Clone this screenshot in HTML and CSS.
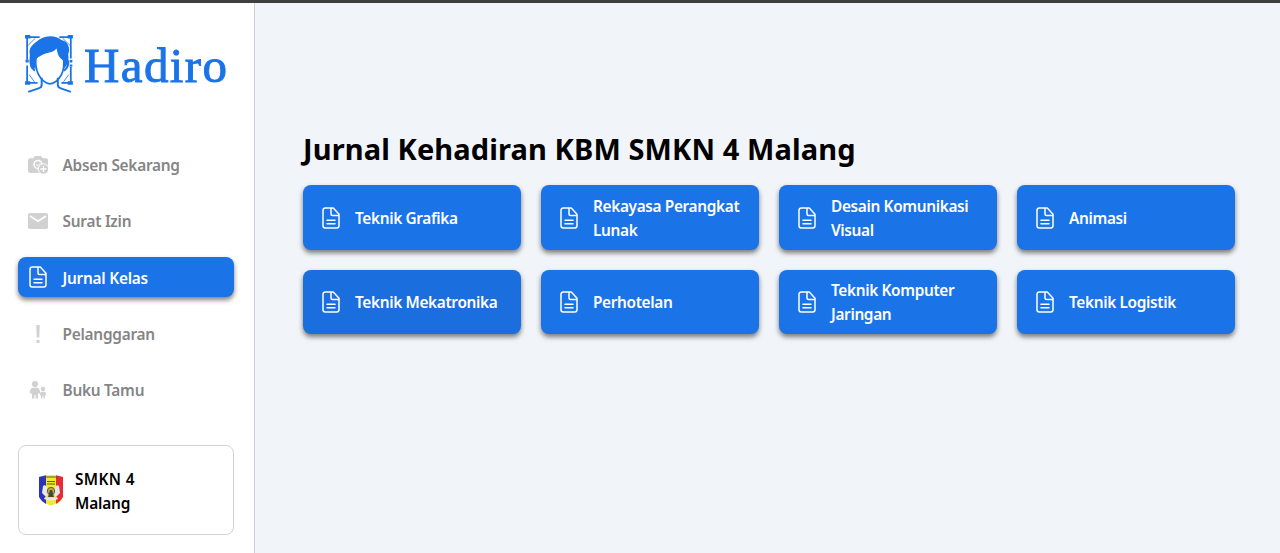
FILE: index.html
```html
<!DOCTYPE html>
<html lang="id">
<head>
<meta charset="utf-8">
<title>Hadiro</title>
<link rel="stylesheet" href="styles.css">
</head>
<body>
<svg width="0" height="0" class="defs">
  <symbol id="doc" viewBox="0 0 18 22">
    <path d="M11.3 1H3.2A2.2 2.2 0 0 0 1 3.2v15.6A2.2 2.2 0 0 0 3.2 21h11.6a2.2 2.2 0 0 0 2.2-2.2V7.2L11.300 1H9v6a1.500 1.500 0 0 0 1.500 1.500H17M5 13.200h8M5 16.800h8" fill="none" stroke="currentColor" stroke-width="1.500" stroke-linejoin="round" stroke-linecap="round"/>
  </symbol>
</svg>
<div class="topbar"></div>
<div class="shell">
  <aside class="sidebar">
    <div class="brand">
      <svg class="brand-mark" width="52" height="61" viewBox="0 0 50 60" preserveAspectRatio="none" fill="none" stroke="#1b73e8" stroke-width="1.700">
        <path d="M3 25V3h12M34 3h11v21M3 31v17h10M45 32v16h-9"/>
        <path d="M4 11 11 4M37 4l7 7M5 40l5 7M43 40l-5 7" stroke-width=".8"/>
        <path d="M1 1h5v3.500H1zM42 1h5v3.500h-5zM1 46.500h5V50H1zM42 46.500h5V50h-5zM1.500 25h3v3h-3zM44 25.500h2.500V28H44zM44 30h2.500v2H44z" fill="#1b73e8" stroke="none"/>
        <path d="M11.500 23c-1 8 0 12 2.500 17 2.500 5 7 9 11 9s8.500-4 11-9c2.500-5 3-9 2-17L32 13 17 20z" fill="#fff"/>
        <path d="M7.500 34C4 28 6 22 5.500 20 4 12 11 9 14 6c6-5 17-5 22 0 6 1 9 8 6.500 14 .8 5 0 10-4 14l-.5-8c-4-2-6-6-6.500-12-5 6-11 3-17.500 8-3 3-3.500 6-3 12z" fill="#1b73e8" stroke="none"/>
        <path d="M6.500 26c-.5 5 1 8 4 10M42.500 26c.5 5-1 8-4 10" stroke-width="2"/>
        <path d="M17 43v7c0 2-1 3-3 3.500L4 57M32.500 43v7c0 2 1 3 3 3.500L45 57" stroke-width="1.900"/>
      </svg>
      <span class="brand-name">Hadiro</span>
    </div>
    <nav class="menu">
      <a class="item"><span class="ico"><svg width="22" height="20" viewBox="0 0 22 20"><path d="M3 3.300h3.200L8 1h6l1.800 2.300H19a2 2 0 0 1 2 2V17a1 1 0 0 1-1 1H3a2 2 0 0 1-2-2V5.300a2 2 0 0 1 2-2z" fill="#d1d1d1"/><circle cx="11" cy="9.500" r="4" fill="none" stroke="#fff" stroke-width="1.500"/><path d="m9.200 9.300 1.500 1.600L13.500 8" fill="none" stroke="#fff"/><circle cx="16.500" cy="14" r="5.200" fill="#cfcfcf" stroke="#fff" stroke-width="1"/><path d="M16.500 10.900v6.200M13.400 14h6.200" stroke="#fff" stroke-width="1.400"/></svg></span><span class="label">Absen Sekarang</span></a>
      <a class="item"><span class="ico"><svg width="22" height="18" viewBox="0 0 22 18"><rect x="1" y="1" width="20" height="16" rx="1.800" fill="#d1d1d1"/><path d="m3 4 8 5.300L19 4" fill="none" stroke="#fff" stroke-width="1.700"/></svg></span><span class="label">Surat Izin</span></a>
      <a class="item active"><span class="ico"><svg width="18" height="22"><use href="#doc"/></svg></span><span class="label">Jurnal Kelas</span></a>
      <a class="item"><span class="ico"><svg width="6" height="20" viewBox="0 0 6 20"><path d="M1.300 1h3.400l-.4 12.500H1.700zM1.500 16h3v3h-3z" fill="#d1d1d1"/></svg></span><span class="label">Pelanggaran</span></a>
      <a class="item"><span class="ico"><svg width="18" height="20" viewBox="0 0 18 20" fill="#d1d1d1"><circle cx="6" cy="4" r="3.100"/><path d="M3.500 7.800h5c1.500 0 2.500 2.500 2.800 5.200L9 14v4.600H6.600V15H5.400v3.600H3V14L.7 13c.3-2.700 1.300-5.200 2.800-5.200z"/><circle cx="14" cy="9" r="2.200"/><path d="M12.700 11.700h2.600c1 0 1.800 1.500 2 3.300l-1.300.6v3h-1.400v-2.300h-1.200v2.300H12v-3l-1.300-.6c.2-1.800 1-3.300 2-3.300z"/></svg></span><span class="label">Buku Tamu</span></a>
    </nav>
    <div class="school">
      <svg width="26" height="32" viewBox="0 0 26 32">
        <path d="M1 3Q13-1 25 3V23Q22 29 13 31.500 4 29 1 23z" fill="#f4e82c"/>
        <path d="M1 3 8 1.300V30Q3 27 1 23z" fill="#2b32c0"/>
        <path d="M18 1.300 25 3V23Q23 27 18 30z" fill="#e92b38"/>
        <path d="M6 3h14M9 7.500h8M9 10h8" stroke="#5b5c30" stroke-width="1"/>
        <path d="M5 12q2-2 4 1l2 5-3 5-4-4zM21 12q-2-2-4 1l-2 5 3 5 4-4zM6 25q7 3 14 0l-1-2q-6 2-12 0z" fill="#e7e8e5"/>
        <circle cx="13" cy="17" r="3.700" fill="#b5ab36" stroke="#5f6044"/>
        <path d="M12 16h2l2 7h-6z" fill="#45483a"/>
      </svg>
      <div class="school-name"><span class="wide">SMKN 4</span><br>Malang</div>
    </div>
  </aside>
  <main class="content">
    <h1 class="title">Jurnal Kehadiran KBM SMKN 4 Malang</h1>
    <div class="grid">
      <a class="card"><svg width="18" height="22"><use href="#doc"/></svg><span class="label">Teknik Grafika</span></a>
      <a class="card"><svg width="18" height="22"><use href="#doc"/></svg><span class="label">Rekayasa Perangkat<br>Lunak</span></a>
      <a class="card"><svg width="18" height="22"><use href="#doc"/></svg><span class="label">Desain Komunikasi<br>Visual</span></a>
      <a class="card"><svg width="18" height="22"><use href="#doc"/></svg><span class="label">Animasi</span></a>
      <a class="card hovered"><svg width="18" height="22"><use href="#doc"/></svg><span class="label">Teknik Mekatronika</span></a>
      <a class="card"><svg width="18" height="22"><use href="#doc"/></svg><span class="label">Perhotelan</span></a>
      <a class="card"><svg width="18" height="22"><use href="#doc"/></svg><span class="label">Teknik Komputer<br>Jaringan</span></a>
      <a class="card"><svg width="18" height="22"><use href="#doc"/></svg><span class="label">Teknik Logistik</span></a>
    </div>
  </main>
</div>
</body>
</html>
```
FILE: styles.css
```css
* { box-sizing: border-box; }
body {
  margin: 0;
  height: 553px;
  display: flex;
  flex-direction: column;
  overflow: hidden;
  font: 600 15.4px/24px "Noto Sans", "Open Sans", sans-serif;
  color: #000;
}
.defs { display: none; }
svg { display: block; flex: none; }
.topbar { height: 3px; background: #3f3f40; flex: none; }
.shell { flex: 1; display: flex; min-height: 0; }
.sidebar {
  width: 255px;
  padding: 31px 20px 0 18px;
  border-right: 1px solid #cdcfd3;
  background: #fff;
}
.brand { height: 60px; display: flex; padding-left: 6px; }
.brand-name {
  margin-left: 8px;
  font: 400 49px/63px "Liberation Serif", serif;
  letter-spacing: 1.4px;
  color: #1b73e8;
  -webkit-text-stroke: 0.9px #1b73e8;
}
.menu { margin-top: 51px; display: grid; gap: 16.2px; }
.item {
  height: 40px;
  display: flex;
  align-items: center;
  color: #858585;
  border-radius: 8px;
}
.label { padding-top: 2.5px; letter-spacing: -0.25px; }
.ico { width: 40px; margin-right: 4.5px; display: flex; justify-content: center; }
.active {
  background: #1b73e8;
  color: #fff;
  box-shadow: 0 3px 5px rgba(0, 0, 0, 0.5);
}
.school {
  height: 90px;
  margin-top: 35px;
  padding-left: 19px;
  display: flex;
  align-items: center;
  gap: 11px;
  border: 1px solid #d3d3d3;
  border-radius: 8px;
}
.school-name { padding-top: 4px; letter-spacing: -0.15px; }
.wide { letter-spacing: 0.35px; }
.content { flex: 1; background: #f1f5f9; padding: 126px 45px 0 48px; }
.title {
  margin: 0;
  font-size: 29px;
  line-height: 40px;
  font-weight: 700;
  letter-spacing: 0.11px;
  white-space: nowrap;
}
.grid {
  margin-top: 16.4px;
  display: grid;
  grid-template-columns: repeat(4, 1fr);
  grid-auto-rows: 64.5px;
  gap: 20px;
}
.card {
  display: flex;
  align-items: center;
  gap: 15px;
  padding-left: 19px;
  border-radius: 8px;
  background: #1b73e8;
  color: #fff;
  white-space: nowrap;
  box-shadow: 0 3px 5px rgba(0, 0, 0, 0.5);
}
.card .label { letter-spacing: -0.35px; }
.hovered { background: #1b6edd; }
```
